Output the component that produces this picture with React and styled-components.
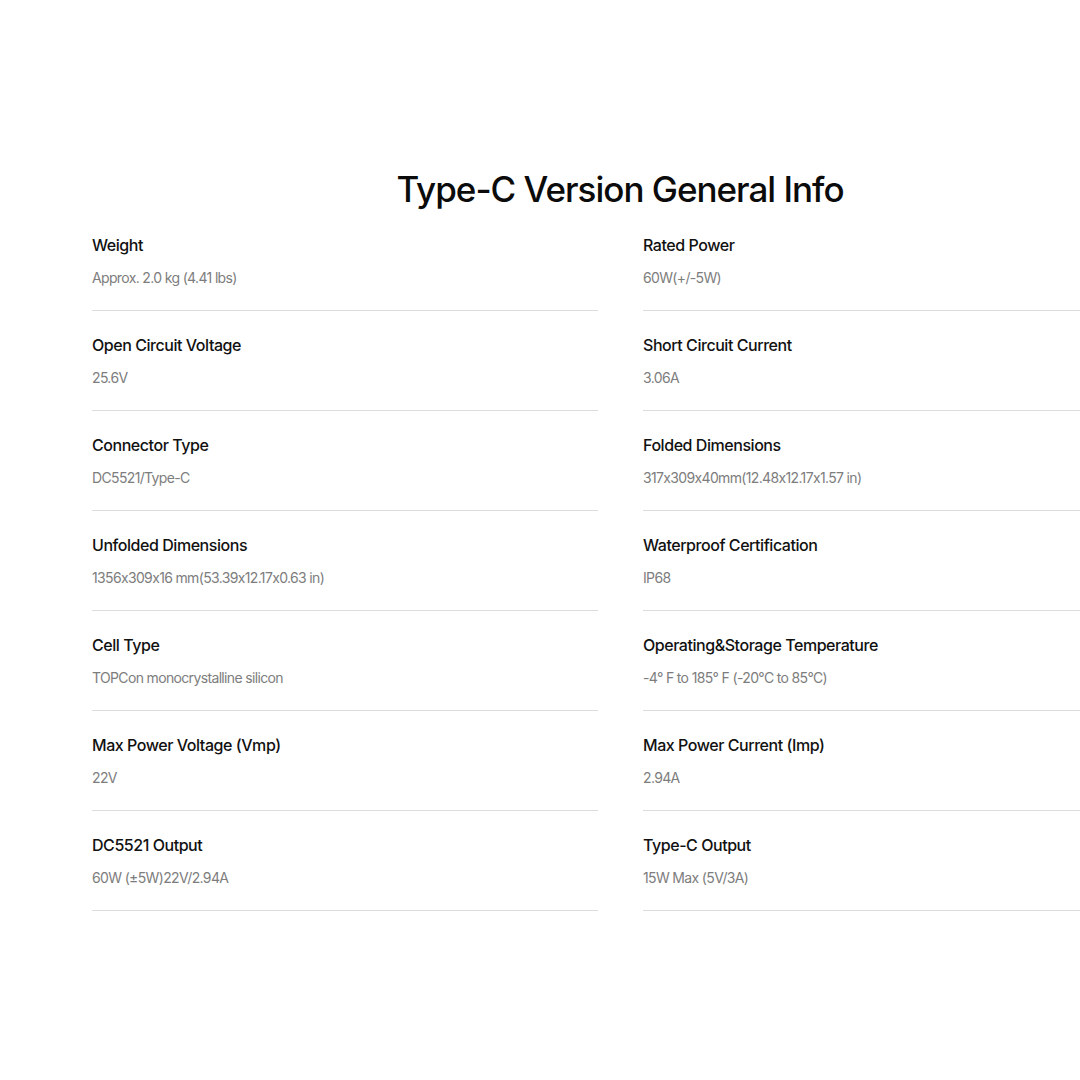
import React from "react";
import styled, { createGlobalStyle } from "styled-components";

const GlobalStyle = createGlobalStyle`
  html, body {
    margin: 0;
    padding: 0;
    background: #ffffff;
    overflow: hidden;
  }
  body {
    font-family: Inter, "Noto Sans", "Liberation Sans", sans-serif;
    color: #111111;
  }
`;

const Page = styled.div`
  width: 1080px;
  height: 1080px;
  overflow: hidden;
`;

const Section = styled.section`
  width: 1056px;
  margin-left: 92px;
  padding-top: 167px;
`;

const Title = styled.h2`
  margin: 0;
  font-size: 35px;
  line-height: 44px;
  font-weight: 500;
  letter-spacing: -1px;
  text-align: center;
  color: #0b0b0b;
`;

const Grid = styled.div`
  display: grid;
  grid-template-columns: 506px 506px;
  column-gap: 45px;
`;

const Item = styled.div`
  display: flex;
  flex-direction: column;
  gap: 12px;
  padding: 23px 0 22px;
  border-bottom: 1px solid #dcdcdc;
`;

const Label = styled.div`
  font-size: 16px;
  line-height: 22px;
  font-weight: 500;
  letter-spacing: -0.45px;
  color: #111111;
`;

const Value = styled.div`
  font-size: 14px;
  line-height: 20px;
  font-weight: 400;
  letter-spacing: -0.65px;
  color: #7d7d7d;
`;

const specs = [
  ["Weight", "Approx. 2.0 kg (4.41 lbs)"],
  ["Rated Power", "60W(+/-5W)"],
  ["Open Circuit Voltage", "25.6V"],
  ["Short Circuit Current", "3.06A"],
  ["Connector Type", "DC5521/Type-C"],
  ["Folded Dimensions", "317x309x40mm(12.48x12.17x1.57 in)"],
  ["Unfolded Dimensions", "1356x309x16 mm(53.39x12.17x0.63 in)"],
  ["Waterproof Certification", "IP68"],
  ["Cell Type", "TOPCon monocrystalline silicon"],
  ["Operating&Storage Temperature", "-4° F to 185° F (-20°C to 85°C)"],
  ["Max Power Voltage (Vmp)", "22V"],
  ["Max Power Current (Imp)", "2.94A"],
  ["DC5521 Output", "60W (±5W)22V/2.94A"],
  ["Type-C Output", "15W Max (5V/3A)"],
];

export default function App() {
  return (
    <Page>
      <GlobalStyle />
      <Section>
        <Title>Type-C Version General Info</Title>
        <Grid>
          {specs.map(([label, value]) => (
            <Item key={label}>
              <Label>{label}</Label>
              <Value>{value}</Value>
            </Item>
          ))}
        </Grid>
      </Section>
    </Page>
  );
}
